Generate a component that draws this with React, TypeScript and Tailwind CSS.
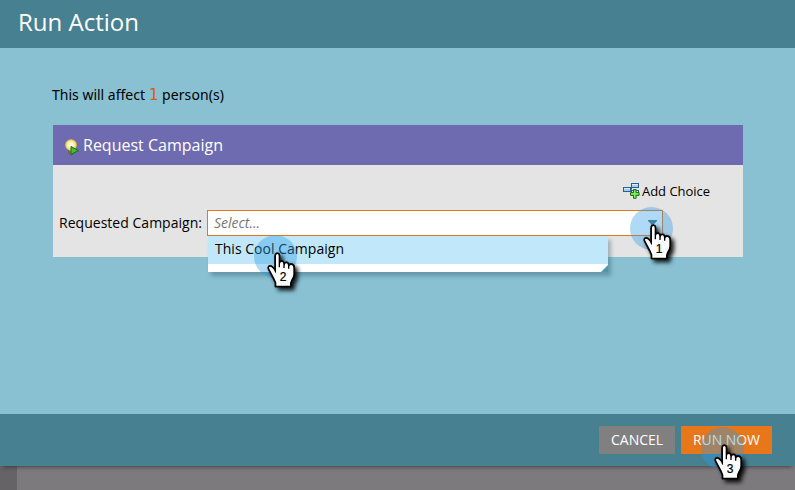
import type { ReactNode } from "react";

function Label({ width, children, className = "" }: { width: number; children: string; className?: string }) {
  return (
    <svg width={width} height="24" className={`block shrink-0 overflow-visible fill-current ${className}`}>
      <text x="0" y="17" textLength={width} lengthAdjust="spacing">{children}</text>
    </svg>
  );
}

function Pointer({ step, className }: { step: number; className: string }) {
  return (
    <div className={`pointer-events-none absolute z-20 size-[43px] ${className}`}>
      <div className="size-[43px] rounded-full bg-[#2c9ce3]/38" />
      <svg viewBox="0 0 129 180" className="absolute left-0 top-0 h-[60px] w-[43px] overflow-visible">
        <g transform="translate(-15 -21)">
          <path
            d="M77 83Q77 74 85 74Q93 74 93 83V99Q101 94 107 103Q115 98 121 107Q137 104 137 119V140Q137 149 130 158L127 166V177H78V165L73 154L57 123Q54 113 64 112Q70 112 77 122Z"
            fill="black"
            stroke="black"
            strokeWidth="2.5"
            className="[filter:drop-shadow(9px_9px_6px_rgba(0,0,0,.9))]"
          />
          <path
            d="M81 83Q81 78 85 78Q89 78 89 83V118H93V108Q93 102 98 102Q103 102 103 109V120H107V113Q107 106 112 106Q117 106 117 113V122H121V116Q121 111 126 111Q133 111 133 120V139Q133 147 126 157L123 165V173H82V164L77 152L61 122Q58 116 64 116Q68 116 74 124L79 134H81Z"
            fill="white"
          />
          <text x="102" y="158" textAnchor="middle" fontSize="36" fill="black" stroke="black" strokeWidth=".7" className="font-['Liberation_Sans',sans-serif]">{step}</text>
        </g>
      </svg>
    </div>
  );
}

function BulbIcon() {
  return (
    <svg width="16" height="18" viewBox="0 0 16 18">
      <defs>
        <radialGradient id="bulb">
          <stop stopColor="#fffef5" />
          <stop offset=".55" stopColor="#fff3ad" />
          <stop offset="1" stopColor="#e6be3c" />
        </radialGradient>
      </defs>
      <path d="M4.5 10h5v4.2L8 16H6l-1.5-2z" fill="#aaa781" stroke="#555a44" strokeWidth=".8" />
      <path d="M5 12h4M5 14h3" stroke="#444b39" />
      <circle cx="7" cy="6" r="5.8" fill="url(#bulb)" />
      <path d="M7 7.5l7.5 4L7 15.5z" fill="#48bd2a" stroke="#176c19" strokeWidth="1" />
    </svg>
  );
}

function AddChoiceIcon() {
  return (
    <svg width="17" height="16" viewBox="0 0 17 16">
      <g fill="#9fd0f2" stroke="#2f5f88">
        <path d="M6.5 6.5H8.5V3" fill="none" />
        <rect x=".5" y="4.5" width="7" height="4" />
        <rect x="8.5" y=".5" width="7" height="4" />
        <rect x="8.5" y="7.5" width="7" height="5" />
      </g>
      <path d="M1 5.5h6M9 1.5h6M9 8.5h6" stroke="#d9effc" />
      <path d="M10.5 6.5h2.6v3h3v2.8h-3v3h-2.6v-3h-3V9.5h3z" fill="#69d62f" stroke="#187326" />
      <path d="M11.8 7.5v7M8.2 10.9h7" stroke="#a2f56c" strokeWidth=".8" />
    </svg>
  );
}

function Button({ children, className }: { children: ReactNode; className: string }) {
  return <button className={`flex h-7 items-center justify-center text-white ${className}`}>{children}</button>;
}

export default function App() {
  return (
    <div className="relative flex h-[490px] w-[795px] flex-col overflow-hidden bg-[#7d7a7d] font-['Open_Sans',sans-serif] text-black">
      <header className="h-12 shrink-0 bg-[#478091] pl-[18px] pt-[14px] text-white">
        <Label width={121} className="text-[24px]">Run Action</Label>
      </header>
      <main className="h-[366px] shrink-0 bg-[#89c1d2] pl-[53px] pt-[35px]">
        <div className="-ml-px flex h-[42px] font-['Noto_Sans',sans-serif] text-[14px]">
          <Label width={93}>This will affect</Label>
          <Label width={8} className="ml-1 font-['DejaVu_Sans',sans-serif] text-[15px] text-[#cc6417]">1</Label>
          <Label width={62} className="ml-[5px]">person(s)</Label>
        </div>
        <section className="h-[132px] w-[690px] bg-[#e4e4e4]">
          <h1 className="flex h-10 items-center bg-[#6f6bb0] pl-[11px] text-white">
            <div className="mr-[3px] mt-[5px]"><BulbIcon /></div>
            <Label width={140} className="mt-[2px] text-[16px]">Request Campaign</Label>
          </h1>
          <div className="flex h-[45px] justify-end pr-[33px] pt-[14px] text-[13px]">
            <div className="mr-[2px] mt-[4px]"><AddChoiceIcon /></div>
            <Label width={68}>Add Choice</Label>
          </div>
          <div className="flex h-[26px]">
            <div className="w-[154px] pl-[6px] pt-[1px] text-[14px]"><Label width={143}>Requested Campaign:</Label></div>
            <div className="relative h-[26px] w-[456px] border border-[#e7761a] bg-white pl-[6px] text-[14px] italic text-[#777]">
              <Label width={46}>Select...</Label>
              <svg width="10" height="7" className="absolute right-1 top-[9px]"><path d="M0 0h9v1L6 4v2H3V4L0 1z" fill="#53737e" /></svg>
              <div className="absolute left-0 top-[25px] z-10 h-9 w-[400px] bg-white pb-2 text-black not-italic shadow-[3px_4px_4px_rgba(35,80,95,.35)]">
                <div className="h-7 bg-[#c1e8fa] pl-[7px] pt-px"><Label width={129}>This Cool Campaign</Label></div>
                <svg width="7" height="7" className="absolute bottom-0 right-0"><path d="M7 0v7H0z" fill="#5197b1" /></svg>
              </div>
            </div>
          </div>
        </section>
      </main>
      <footer className="z-10 flex h-[52px] shrink-0 justify-end gap-[6px] bg-[#478091] pr-[23px] pt-3 text-[14px] shadow-[0_4px_4px_-3px_rgba(40,40,40,.7)]">
        <Button className="w-[76px] bg-[#808080]"><Label width={52}>CANCEL</Label></Button>
        <Button className="w-[91px] bg-[#e8771a]"><Label width={67}>RUN NOW</Label></Button>
      </footer>
      <div className="h-6 w-[17px] bg-[#666367]" />
      <Pointer step={1} className="left-[630px] top-[207px]" />
      <Pointer step={2} className="left-[253.5px] top-[235px]" />
      <Pointer step={3} className="left-[701px] top-[427px]" />
    </div>
  );
}
